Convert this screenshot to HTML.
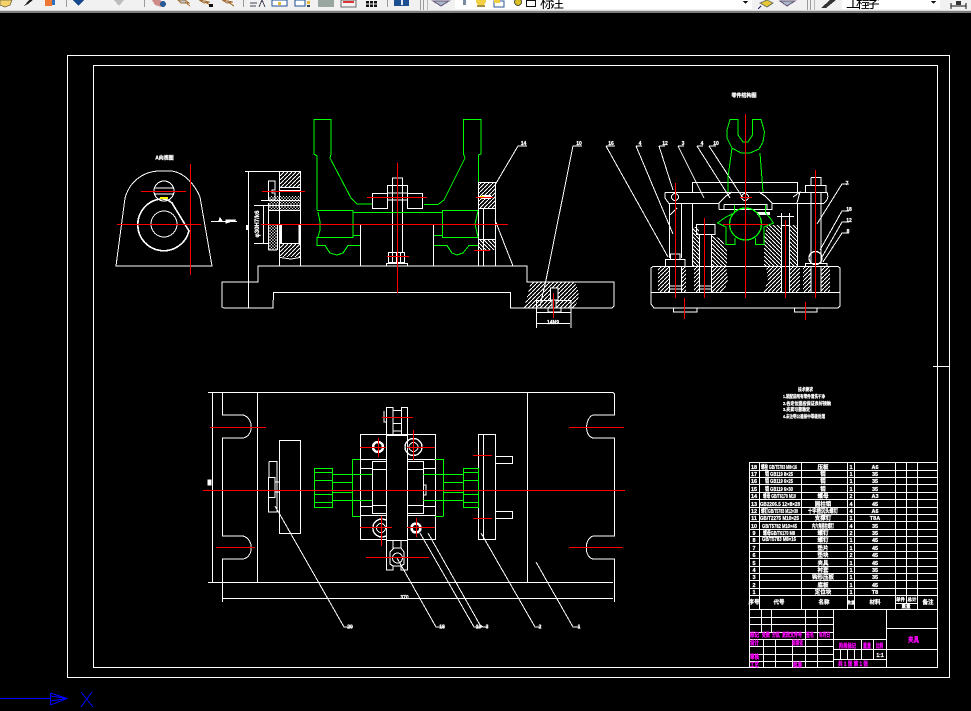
<!DOCTYPE html>
<html><head><meta charset="utf-8"><style>
html,body{margin:0;padding:0;background:#000;width:971px;height:711px;overflow:hidden}
svg{position:absolute;left:0;top:0;display:block;shape-rendering:crispEdges}
.w{stroke:#fff;fill:none;stroke-width:1}
.g{stroke:#0f0;fill:none;stroke-width:1}
.r{stroke:#f00;fill:none;stroke-width:1}
text{font-family:"Liberation Sans","Noto Sans CJK SC",sans-serif;font-weight:700}
.t{fill:#fff;stroke:#fff;stroke-width:.25;font-size:5.500px;text-anchor:middle}
.m{fill:#f0f;stroke:#f0f;stroke-width:.3;font-size:6px;text-anchor:middle}
.tb{font-family:"Liberation Sans","Noto Sans CJK SC",sans-serif;font-weight:400;font-size:14px;fill:#000}
</style></head><body>
<svg width="971" height="711" viewBox="0 0 971 711" xmlns="http://www.w3.org/2000/svg">
<defs>
<pattern id="h" width="4" height="4" patternUnits="userSpaceOnUse"><path d="M0 4L4 0" stroke="#fff" stroke-width="1"/></pattern>
<pattern id="k" width="4" height="4" patternUnits="userSpaceOnUse"><path d="M0 0L4 4" stroke="#fff" stroke-width="1"/></pattern>
<pattern id="d" width="3" height="3" patternUnits="userSpaceOnUse"><path d="M0 3L3 0M0 0L3 3" stroke="#fff" stroke-width=".9"/></pattern>
</defs>
<rect width="971" height="711" fill="#000"/>

<!-- toolbar -->
<rect width="971" height="11" fill="#f1f1f1"/>
<rect y="10" width="971" height="1" fill="#d8d8d8"/>
<rect y="11" width="971" height="2" fill="#7d7d7d"/>
<g>
<path d="M0 0H12L10 5L5 7L0 5Z" fill="#f4d36a" stroke="#8a7a50"/>
<path d="M24 6L29 0H33L28 4Z" fill="#222"/>
<rect x="45" y="0" width="7" height="6" fill="#ee7733"/><rect x="52" y="0" width="3" height="5" fill="#3070c0"/>
<rect x="66" y="0" width="1" height="7" fill="#9a9a9a"/>
<path d="M73 0H84L78.500 6Z" fill="#164a8c"/>
<path d="M114 0H124L119 6Z" fill="#bdbdbd"/>
<rect x="144" y="0" width="1" height="7" fill="#9a9a9a"/>
<path d="M152 0H160L165 5L161 7L155 5Z" fill="#cf8a8a"/><circle cx="163" cy="4" r="3" fill="#2a5a96"/>
<path d="M178 0L181 3L189 3L185 0ZM185 2L190 6" stroke="#a87030" fill="#bcc8d8"/>
<path d="M199 0L204 3L210 2ZM205 2L210 5" stroke="#a87030" fill="#bcc8d8"/><rect x="209" y="4" width="4" height="3" fill="#111"/>
<path d="M222 0L227 3L233 2ZM228 2L234 6" stroke="#a87030" fill="#bcc8d8"/>
<rect x="243" y="0" width="1" height="7" fill="#9a9a9a"/>
<path d="M250 3H257M250 6H256M259 7L262 0L265 7" stroke="#445" fill="none"/>
<rect x="272" y="0" width="15" height="6" fill="#fff" stroke="#1d4f91"/><rect x="278" y="2" width="3" height="3" fill="#e5b93a"/>
<rect x="295" y="0" width="10" height="6" fill="#fff" stroke="#1d4f91"/><rect x="307" y="1" width="3" height="3" fill="#e5b93a"/><rect x="307" y="5" width="3" height="2" fill="#345"/>
<rect x="318" y="0" width="16" height="7" fill="#9aa6a0"/>
<rect x="341" y="0" width="15" height="7" fill="#f4f4f4" stroke="#666"/><path d="M343 2H354" stroke="#d33" stroke-width="2"/>
<rect x="366" y="1" width="11" height="6" fill="#111"/><path d="M369.500 1V7M373.500 1V7M366 4H377" stroke="#eee"/>
<rect x="387" y="0" width="1" height="7" fill="#9a9a9a"/>
<rect x="394" y="0" width="15" height="6" fill="#1c4f90"/><rect x="401" y="0" width="2" height="5" fill="#dfe8f4"/>
<rect x="420" y="0" width="1" height="10" fill="#9a9a9a"/><rect x="423" y="0" width="1" height="10" fill="#9a9a9a"/><rect x="427" y="0" width="1" height="10" fill="#b8b8b8"/>
<path d="M433 1L441 6L449 1Z" fill="#a8b8c8" stroke="#657"/>
<rect x="455" y="0" width="297" height="9" fill="#fff"/>
<rect x="463" y="0" width="3" height="5" fill="#7889a0"/>
<circle cx="481" cy="1" r="5" fill="#f0d040"/><rect x="477" y="5" width="8" height="2" fill="#a89040"/>
<rect x="494" y="1" width="10" height="6" fill="#fff" stroke="#2a5a96"/><rect x="494" y="0" width="6" height="3" fill="#f0d040"/>
<circle cx="518" cy="2" r="3.500" fill="#d8c020" stroke="#554"/>
<rect x="526.500" y="0.500" width="9" height="6" fill="#fff" stroke="#111"/>
<text x="540" y="8" class="tb" textLength="24">标注</text>
<path d="M743 1H748L745.500 4Z" fill="#111"/>
<path d="M760 3L767 0L773 3L767 7Z" fill="#e8c830" stroke="#776"/><path d="M758 9L761 6" stroke="#226"/>
<path d="M780 1L787 6L795 1Z" fill="#a8b8c8" stroke="#657"/>
<rect x="807" y="0" width="1" height="10" fill="#9a9a9a"/><rect x="810" y="0" width="1" height="10" fill="#9a9a9a"/><rect x="814" y="0" width="1" height="10" fill="#b8b8b8"/>
<path d="M821 8L830 0H836L826 8Z" fill="#333"/>
<rect x="842" y="0" width="98" height="9" fill="#fff"/>
<text x="846" y="8" class="tb" textLength="34">工程字</text>
<path d="M931 1H936L933.500 4Z" fill="#111"/>
<path d="M951 6H966M951 3V9M966 3V9" stroke="#111" fill="none"/><rect x="956" y="1" width="5" height="4" fill="#333"/>
</g>

<!-- frames -->
<g class="w">
<rect x="67.500" y="55.500" width="882" height="622"/>
<rect x="93.500" y="65.500" width="844" height="602"/>
<path d="M933 366.500H949"/>
</g>

<!-- A view -->
<g class="w">
<path d="M116 266L125 198C130 180 145 171 160 171H172C185 173 195 185 200 197L212 266Z"/>
<circle cx="164" cy="191" r="10"/>
<path d="M155 188H173M155 194H173"/>
<path d="M160 199A26 26 0 1 0 189 231L172 203Q166 198 160 199Z" stroke-width="1.600"/>
<circle cx="164" cy="224" r="13"/>
<path d="M211 221.500H237" />
<path d="M219 221L220 218L222 221ZM226 220H236L226 223Z" fill="#fff"/>
</g>
<path d="M160 198H168" stroke="#ff0" stroke-width="2"/>
<text x="164.500" y="159.500" class="t" style="font-size:5px">A向视图</text>
<g class="r">
<path d="M117 224.500H201" stroke-width="1.300"/><path d="M190.500 164V275" stroke-width="1.300"/><path d="M141 191.500H186"/>
</g>

<!-- front view white -->
<g class="w">
<path d="M222 282L222 307L224 308H273L273.500 292.500H510.500V308H612L614 306V282H527V266H258V282Z"/>
<path d="M248.500 171V308"/>
<path d="M245 171.500H301M279.500 171V266M300.500 171V266"/>
<rect x="279" y="172" width="22" height="15" fill="url(#h)" stroke="none"/>
<path d="M280 187.500H300M280 190.500H300"/>
<path d="M268.500 181H275V190H272V193H275V200H268.500Z"/>
<path d="M261 200.500H300M265 205.500H300"/>
<rect x="269" y="196" width="31" height="14" fill="url(#d)" stroke="none"/>
<path d="M268.500 203V250M268 210.500H300"/>
<path d="M254 205.500H268M254 243.500H268M263.500 206V243"/>
<rect x="269" y="224" width="8" height="26" fill="url(#d)" stroke="none"/>
<path d="M268.500 250H277M277.500 224V250"/>
<path d="M281 224V243M299.500 224V243" stroke-width="2"/>
<rect x="280" y="243" width="21" height="14" fill="url(#h)" stroke="none"/>
<path d="M280 243.500H300M280 257.500L291 259L300 257.500"/>
<path d="M360.500 224V266M433.500 224V266M360 224.500H434"/>
<rect x="372.500" y="193.500" width="15" height="15"/><rect x="407.500" y="193.500" width="15" height="15"/>
<path d="M392.500 184V252M402.500 184V252M392.500 184V178H402.500V184" stroke-width="1.200"/>
<path d="M387.500 193V185.500H407.500V193M387.500 200H407.500M387.500 193H407.500"/>
<rect x="388.500" y="252.500" width="16" height="10"/><path d="M392.500 252V262M396.500 252V262M400.500 252V262"/>
<path d="M386.500 263.500H407.500V266H386.500Z"/>
<path d="M478.500 182V266M483.500 208V266M495.500 182V266M478 182.500H495M478 208.500H495M478 239.500H495"/>
<rect x="479" y="183" width="16" height="25" fill="url(#h)" stroke="none"/>
<rect x="479" y="240" width="16" height="10" fill="url(#k)" stroke="none"/>
<path d="M482 197H491" stroke-width="4"/>
<path d="M495 185L518 146H527M495 220L513 266"/>
<path d="M540 306L546 280L573 146H582M606 146H615"/>
<path d="M606 146L668 257"/>
</g>
<path d="M480 197H484" stroke="#ff0" stroke-width="2"/>
<!-- key -->
<path d="M531 282H574C580 290 580 300 574 308H524Z" fill="url(#h)"/>
<g class="w">
<path d="M536.500 300.500V328M571 300.500V328M536 300.500H571M536 312.500H571"/>
<path d="M550.500 288H558V300H550.500ZM552 300V308H556V300M548 308H561V312H548Z" fill="#000"/>
<path d="M537 323.500H570"/>
</g>
<text x="553" y="324" class="t" style="font-size:5px">14N9</text>
<rect x="246" y="225" width="3" height="5" fill="#fff"/>
<text x="257" y="226" class="t" transform="rotate(-90 257 224)" style="font-size:6px">φ30H7/k6</text>
<text x="523.500" y="145" class="t" style="font-size:5px">14</text>
<text x="579" y="145" class="t" style="font-size:5px">10</text>
<text x="611" y="145" class="t" style="font-size:5px">16</text>

<!-- front view green -->
<g class="g">
<path d="M317 210V156L314 154V119.500H331V154L330 158L351 198L357 204H372"/>
<path d="M317 210.500H353V237.500H317V245.500H325L330 253L337 255L343 253L348 245.500H360M353 235.500H360"/>
<path d="M318 212L320 222V230L318 237M353 212.500H442M442 210.500H478M442.500 210.500V237.500H478M434 235.500H442"/>
<path d="M434 245.500H447L452 253L457 255L463 253L469 245.500H478"/>
<path d="M478.500 182V155L481 154V119.500H463.500V154L465 158L444 200L438 204.500H424"/>
<path d="M478 211L475 224L478 237"/>
</g>
<g class="r">
<path d="M261 224.500H508" stroke-width="1.300"/>
<path d="M397.500 163V293M367 197.500H427M387 256.500H409"/>
<path d="M262 191.500H305M476 197.500H493M474 250.500H490M553.500 293V318"/>
</g>

<!-- right view -->
<text x="744" y="97" class="t" style="font-size:5px">零件结构图</text>
<rect x="658" y="267" width="11" height="25" fill="url(#h)"/><rect x="681" y="267" width="5" height="25" fill="url(#h)"/><rect x="694" y="267" width="5" height="25" fill="url(#h)"/><path d="M711 267H726L728 280L724 292H711Z" fill="url(#h)"/>
<path d="M766 267H781V292H764L768 280Z" fill="url(#h)"/><rect x="789" y="267" width="11" height="25" fill="url(#h)"/><rect x="803" y="267" width="8" height="25" fill="url(#h)"/><rect x="821" y="267" width="9" height="25" fill="url(#h)"/>
<rect x="692" y="227" width="7" height="39" fill="url(#k)"/><path d="M711 234L722 240L727 250V266H711Z" fill="url(#k)"/>
<path d="M781 225H767L764 240V266H781Z" fill="url(#k)"/><rect x="789" y="225" width="9" height="41" fill="url(#k)"/>
<g class="w">
<path d="M653 266.500H838L840 268V306L838 308H654L651 304V268Z"/>
<path d="M651 292.500H840"/>
<path d="M673.500 308V312H697V308M794.500 308V312H817V308"/>
<path d="M665 192.500H827C829 197 827 201 824 203M665 192.500V198L669 203.500H719M772 203.500H824"/>
<path d="M692.500 192V182.500H797.500V192"/>
<path d="M719 209.500H772V203L765 196L759 192M719 209.500V203L726 196L732 192M724 204.500H767V209M724 204.500V209"/>
<path d="M669.500 203V258M681.500 203V258M692.500 203V266M797.500 203V266"/>
<path d="M811 177.500H821V185M811 177.500V185M805.500 192V185.500H826V192M811 192V263M821 192V263"/>
<path d="M696.500 224.500H715V234.500H696.500ZM699.500 234V292M711.500 234V292M700 286H711M700 289H711"/>
<path d="M665.500 266V259.500H685V266M670.500 259V254H680V259M669.500 266V292M681.500 266V292M670 286H681M670 289H681"/>
<path d="M805.500 266V263.500H827V266M811 266V292M821 266V292"/>
<circle cx="815.500" cy="258" r="6.500" stroke-width="1.300"/>
<path d="M781.500 225V292M789.500 225V292M781 225.500H789M777 216.500H794M781.500 213V225M789.500 213V225"/>
<path d="M636 146H642M636 146L673 234M659 146H665M659 146L673 190M678 146H684M678 146L704 198M697 146H703M697 146L730 198M709 146H716M709 146L743 198"/>
<path d="M849 184H842L817 224M849 211H842L820 250M849 222H842L822 257M849 233H842L823 262"/>
<circle cx="675" cy="197" r="3.500"/><circle cx="745" cy="197" r="3.500"/>
<path d="M670 215L677 208M793 197L800 192L797 203" />
</g>
<rect x="757" y="212" width="13" height="3" fill="#fff"/>
<g class="t" style="font-size:5px"><text x="640" y="145">4</text><text x="665" y="145">12</text><text x="683" y="145">3</text><text x="702" y="145">4</text><text x="716" y="145">10</text><text x="847" y="185">7</text><text x="849" y="211">18</text><text x="849" y="222">12</text><text x="848" y="233">8</text></g>
<g class="g">
<path d="M730 119.500H738V135L743 142H748L752.500 135V119.500H761L764.500 132L763 142L759 149L750 153H741L732 148L727 138V130Z"/>
<path d="M732 148L728 177V192M760 153L763 192"/>
<circle cx="745.500" cy="224" r="16" stroke-width="1.300"/>
<path d="M734.500 205V213L726 217L717.500 223L726 227V244.500H735V238M765.500 205V213L770 218L773.500 223L764 227V244.500H755.500V238"/>
</g>
<g class="r">
<path d="M675.500 183V298M704.500 218V298M745.500 114V298M785.500 220V298M815.500 170V298M684.500 298V319M805.500 302V320"/>
<path d="M723 224.500H768" stroke-width="1.300"/><path d="M740 197.500H752"/>
</g>

<!-- top view white -->
<g class="w">
<path d="M208 392.500H613L614.500 394V415H593C585 418 584 436 593 438H614.500V536H593C584 539 584 557 593 559H614.500V602M208 582.500H613"/>
<path d="M222.500 392V415H243C254 418 254 436 243 438H222.500V536H243C254 539 254 557 243 559H222.500V602"/>
<path d="M212.500 392V582M257.500 392V582M527.500 392V582M222 598.500H613"/>
<rect x="279.500" y="440.500" width="21" height="93"/>
<path d="M269 461.500H277V512H268.500V477M269 461.500V477M268.500 477.500H275V497.500H268.500M275 477V497M275 482H279M275 492H279"/>
<rect x="360.500" y="434.500" width="75" height="105"/>
<path d="M360 459.500H386M360 515.500H386M407 459.500H435M407 515.500H435M372.500 461V513M372 461.500H386M372 513.500H386M372 469.500H386M372 505.500H386M360 468.500H372M360 506.500H372M407 461.500H423.500V513.500H407M407 469.500H423M407 505.500H423M423 468.500H435M423 506.500H435M423.500 485H426V495H423.500"/>
<rect x="386.500" y="435.500" width="21" height="105" fill="#000"/>
<path d="M386.500 435V407.500H393V435M401.500 435V407.500H407.500V435M393 410.500H401M393 423.500H401M393 431H401M384 411V422H386"/>
<path d="M386.500 541V570H393V566H401V570H407.500V541M393 541V548H401V541M390 552L394 548H401L404 552L404 564L401 566H393L390 564Z"/>
<circle cx="397.500" cy="558" r="5"/>
<circle cx="378" cy="447" r="5" stroke-width="2.500"/><circle cx="413.500" cy="447" r="8.500" stroke-width="1.400"/><circle cx="413.500" cy="447" r="4.500"/>
<path d="M386 520A9 9 0 1 0 386 536" stroke-width="1.400"/><circle cx="381" cy="528" r="4.500"/>
<circle cx="416" cy="528" r="4.500" stroke-width="2.500"/>
<rect x="478.500" y="434.500" width="17" height="105"/><path d="M483.500 434V539"/>
<path d="M495 456.500H512.500V463.500H495M495 511.500H512.500V518.500H495"/>
<path d="M275 506L344 627H353M397 558L436 627H445M420 533L474 627H482M428 533L480 625L483 627H488M481 533L535 627H541M536 562L573 627H580"/>
<rect x="208" y="480" width="3" height="5" fill="#fff"/>
</g>
<g class="t" style="font-size:5px"><text x="404.500" y="599">370</text><text x="350" y="628.500">20</text><text x="442" y="628.500">18</text><text x="478.500" y="628.500">19</text><text x="487" y="628.500">3</text><text x="540" y="628.500">2</text><text x="579" y="628.500">1</text></g>
<g class="g">
<rect x="314.500" y="468.500" width="18" height="39"/><path d="M315 472.500H332M315 480.500H332M315 494.500H332M315 502.500H332"/>
<path d="M332 474.500H372M332 482.500H352M332 492.500H352M332 500.500H372M352.500 459V516.500M352 459.500H360M352 516.500H360"/>
<rect x="463.500" y="468.500" width="15" height="39"/><path d="M464 472.500H478M464 480.500H478M464 494.500H478M464 502.500H478"/>
<path d="M423 474.500H463M443 482.500H463M443 492.500H463M423 500.500H463M443.500 459V516.500M435 459.500H443M435 516.500H443"/>
</g>
<g class="r">
<path d="M203 490.500H625" stroke-width="1.300"/>
<path d="M210 427.500H266M216 547.500H255M569 427.500H624M569 547.500H623"/>
<path d="M382 417.500H413M366 557.500H429M473 455.500H492M473 518.500H492"/>
<path d="M360 447.500H386M378.500 438V457M407 447.500H435M413.500 430V460"/>
<path d="M360 527.500H392M381.500 516V546M407 527.500H435M416.500 518V537"/>
</g>

<!-- tech notes -->
<g class="t" style="font-size:4.500px;text-anchor:start">
<text x="798" y="391" textLength="15" lengthAdjust="spacingAndGlyphs">技术要求</text>
<text x="783" y="398" textLength="42" lengthAdjust="spacingAndGlyphs">1.装配前所有零件清洗干净</text>
<text x="783" y="405" textLength="48" lengthAdjust="spacingAndGlyphs">2.各定位面应保证良好接触</text>
<text x="783" y="411" textLength="27" lengthAdjust="spacingAndGlyphs">3.夹紧可靠稳定</text>
<text x="783" y="418" textLength="42" lengthAdjust="spacingAndGlyphs">4.未注明公差按中等级处理</text>
</g>

<!-- parts table -->
<g class="w">
<path d="M749.500 462.500H938M749.500 462V668M759.500 462V595M801.500 462V609M847.500 462V609M854.500 462V609M895.500 462V609M906.500 462V603M917.500 462V609"/>
<path d="M749 470.500H938M749 477.500H938M749 484.500H938M749 492.500H938M749 499.500H938M749 507.500H938M749 514.500H938M749 521.500H938M749 529.500H938M749 536.500H938M749 543.500H938M749 551.500H938M749 558.500H938M749 566.500H938M749 573.500H938M749 580.500H938M749 588.500H938M749 595.500H938"/>
<path d="M759.500 595V609M895 603.500H917M749 609.500H938"/>
<path d="M761.500 609V632M771.500 609V632M805.500 609V668M817.500 609V668M833.500 609V668M749 617.500H833M749 624.500H833M749 632.500H833M749 639.500H886M749 646.500H833M749 654.500H833M749 661.500H833"/>
<path d="M763.500 639V668M775.500 639V668M792.500 639V668"/>
<path d="M833 649.500H886M833 659.500H886M861.500 639V659M873.500 639V659M840.500 649V659M847.500 649V659M854.500 649V659"/>
<path d="M886.500 609V668M886 628.500H938M886 649.500H938"/>
</g>
<g class="t">
<text x="754" y="469">18</text><text x="754" y="476">17</text><text x="754" y="483">16</text><text x="754" y="491">15</text><text x="754" y="498">14</text><text x="754" y="506">13</text><text x="754" y="513">12</text><text x="754" y="520">11</text><text x="754" y="528">10</text><text x="754" y="535">9</text><text x="754" y="542">8</text><text x="754" y="550">7</text><text x="754" y="557">6</text><text x="754" y="565">5</text><text x="754" y="572">4</text><text x="754" y="579">3</text><text x="754" y="587">2</text><text x="754" y="594">1</text>
</g>
<g class="t" style="text-anchor:start">
<text x="761" y="469" textLength="36" lengthAdjust="spacingAndGlyphs">螺栓 GB/T5783 M8×16</text>
<text x="765" y="476" textLength="28" lengthAdjust="spacingAndGlyphs">销 GB119 8×25</text>
<text x="765" y="483" textLength="28" lengthAdjust="spacingAndGlyphs">销 GB119 6×25</text>
<text x="765" y="491" textLength="28" lengthAdjust="spacingAndGlyphs">销 GB119 6×30</text>
<text x="763" y="498" textLength="33" lengthAdjust="spacingAndGlyphs">螺母 GB/T6170 M10</text>
<text x="760" y="506" textLength="40" lengthAdjust="spacingAndGlyphs">GB2206.5 12×8×28</text>
<text x="761" y="513" textLength="37" lengthAdjust="spacingAndGlyphs">螺钉GB/T5783 M12×30</text>
<text x="760" y="520" textLength="39" lengthAdjust="spacingAndGlyphs">GB/T2275 M10×25</text>
<text x="762" y="528" textLength="35" lengthAdjust="spacingAndGlyphs">GB/T5782 M10×45</text>
<text x="763" y="535" textLength="32" lengthAdjust="spacingAndGlyphs">螺母GB/T6170 M8</text>
<text x="762" y="541" textLength="34" lengthAdjust="spacingAndGlyphs">GB/T5783 M8×16</text>
</g>
<g class="t">
<text x="823" y="469">压板</text><text x="823" y="476">销</text><text x="823" y="483">销</text><text x="823" y="491">销</text><text x="823" y="498">螺母</text><text x="823" y="506">圆柱销</text>
<text x="823" y="513" textLength="30" lengthAdjust="spacingAndGlyphs">十字槽沉头螺钉</text><text x="823" y="520">支撑钉</text><text x="823" y="528" textLength="22" lengthAdjust="spacingAndGlyphs">内六角圆柱螺钉</text><text x="823" y="535">螺钉</text><text x="823" y="542">螺钉</text><text x="823" y="550">垫片</text><text x="823" y="557">垫块</text><text x="823" y="565">夹具</text><text x="823" y="572">衬套</text><text x="823" y="579">钩形压板</text><text x="823" y="587">底板</text><text x="823" y="594">定位块</text>
<text x="851" y="469">1</text><text x="851" y="476">1</text><text x="851" y="483">1</text><text x="851" y="491">1</text><text x="851" y="498">2</text><text x="851" y="506">4</text><text x="851" y="513">4</text><text x="851" y="520">1</text><text x="851" y="528">4</text><text x="851" y="535">2</text><text x="851" y="542">1</text><text x="851" y="550">1</text><text x="851" y="557">2</text><text x="851" y="565">1</text><text x="851" y="572">1</text><text x="851" y="579">1</text><text x="851" y="587">1</text><text x="851" y="594">1</text>
<text x="875" y="469">A6</text><text x="875" y="476">35</text><text x="875" y="483">35</text><text x="875" y="491">35</text><text x="875" y="498">A3</text><text x="875" y="506">45</text><text x="875" y="513">A6</text><text x="875" y="520">T8A</text><text x="875" y="528">35</text><text x="875" y="535">35</text><text x="875" y="542">45</text><text x="875" y="550">45</text><text x="875" y="557">45</text><text x="875" y="565">45</text><text x="875" y="572">35</text><text x="875" y="579">35</text><text x="875" y="587">45</text><text x="875" y="594">T8</text>
<text x="754" y="604">序号</text><text x="779" y="604">代号</text><text x="824" y="604">名称</text><text x="851" y="604" style="font-size:4px">数量</text><text x="875" y="604">材料</text><text x="900.500" y="601" style="font-size:4.500px">单件</text><text x="912" y="601" style="font-size:4.500px">总计</text><text x="906" y="608" style="font-size:4.500px">重量</text><text x="928" y="604">备注</text>
<text x="880" y="657" style="font-size:5px">1:1</text>
</g>
<g class="m" style="text-anchor:start">
<text x="750" y="637" textLength="9" lengthAdjust="spacingAndGlyphs">标记</text>
<text x="762" y="637" textLength="8" lengthAdjust="spacingAndGlyphs">处数</text>
<text x="772" y="637" textLength="8" lengthAdjust="spacingAndGlyphs">分区</text>
<text x="782" y="637" textLength="20" lengthAdjust="spacingAndGlyphs">更改文件号</text>
<text x="806" y="637" textLength="8" lengthAdjust="spacingAndGlyphs">签名</text>
<text x="819" y="637" textLength="11" lengthAdjust="spacingAndGlyphs">年月日</text>
<text x="750" y="645" textLength="9" lengthAdjust="spacingAndGlyphs">设计</text>
<text x="792" y="645" textLength="11" lengthAdjust="spacingAndGlyphs">标准化</text>
<text x="750" y="659" textLength="9" lengthAdjust="spacingAndGlyphs">审核</text>
<text x="750" y="667" textLength="9" lengthAdjust="spacingAndGlyphs">工艺</text>
<text x="793" y="667" textLength="9" lengthAdjust="spacingAndGlyphs">批准</text>
<text x="839" y="648" textLength="17" lengthAdjust="spacingAndGlyphs">阶段标记</text>
<text x="863" y="648" textLength="8" lengthAdjust="spacingAndGlyphs">重量</text>
<text x="876" y="648" textLength="7" lengthAdjust="spacingAndGlyphs">比例</text>
<text x="838" y="666" textLength="30" lengthAdjust="spacingAndGlyphs">共 1 张 第 1 张</text>
<text x="908" y="642" textLength="11" lengthAdjust="spacingAndGlyphs" style="font-size:7px">夹具</text>
</g>

<!-- UCS -->
<g stroke="#00f" fill="none">
<path d="M0 698.500H50" stroke-width="1.300"/>
<path d="M50.500 693V705M50.500 693L67 698.500L50.500 705M50.500 696L67 698.500M50.500 701L67 698.500"/>
<path d="M81 692L93 707M92 692L81 707"/>
</g>
</svg>
</body></html>
